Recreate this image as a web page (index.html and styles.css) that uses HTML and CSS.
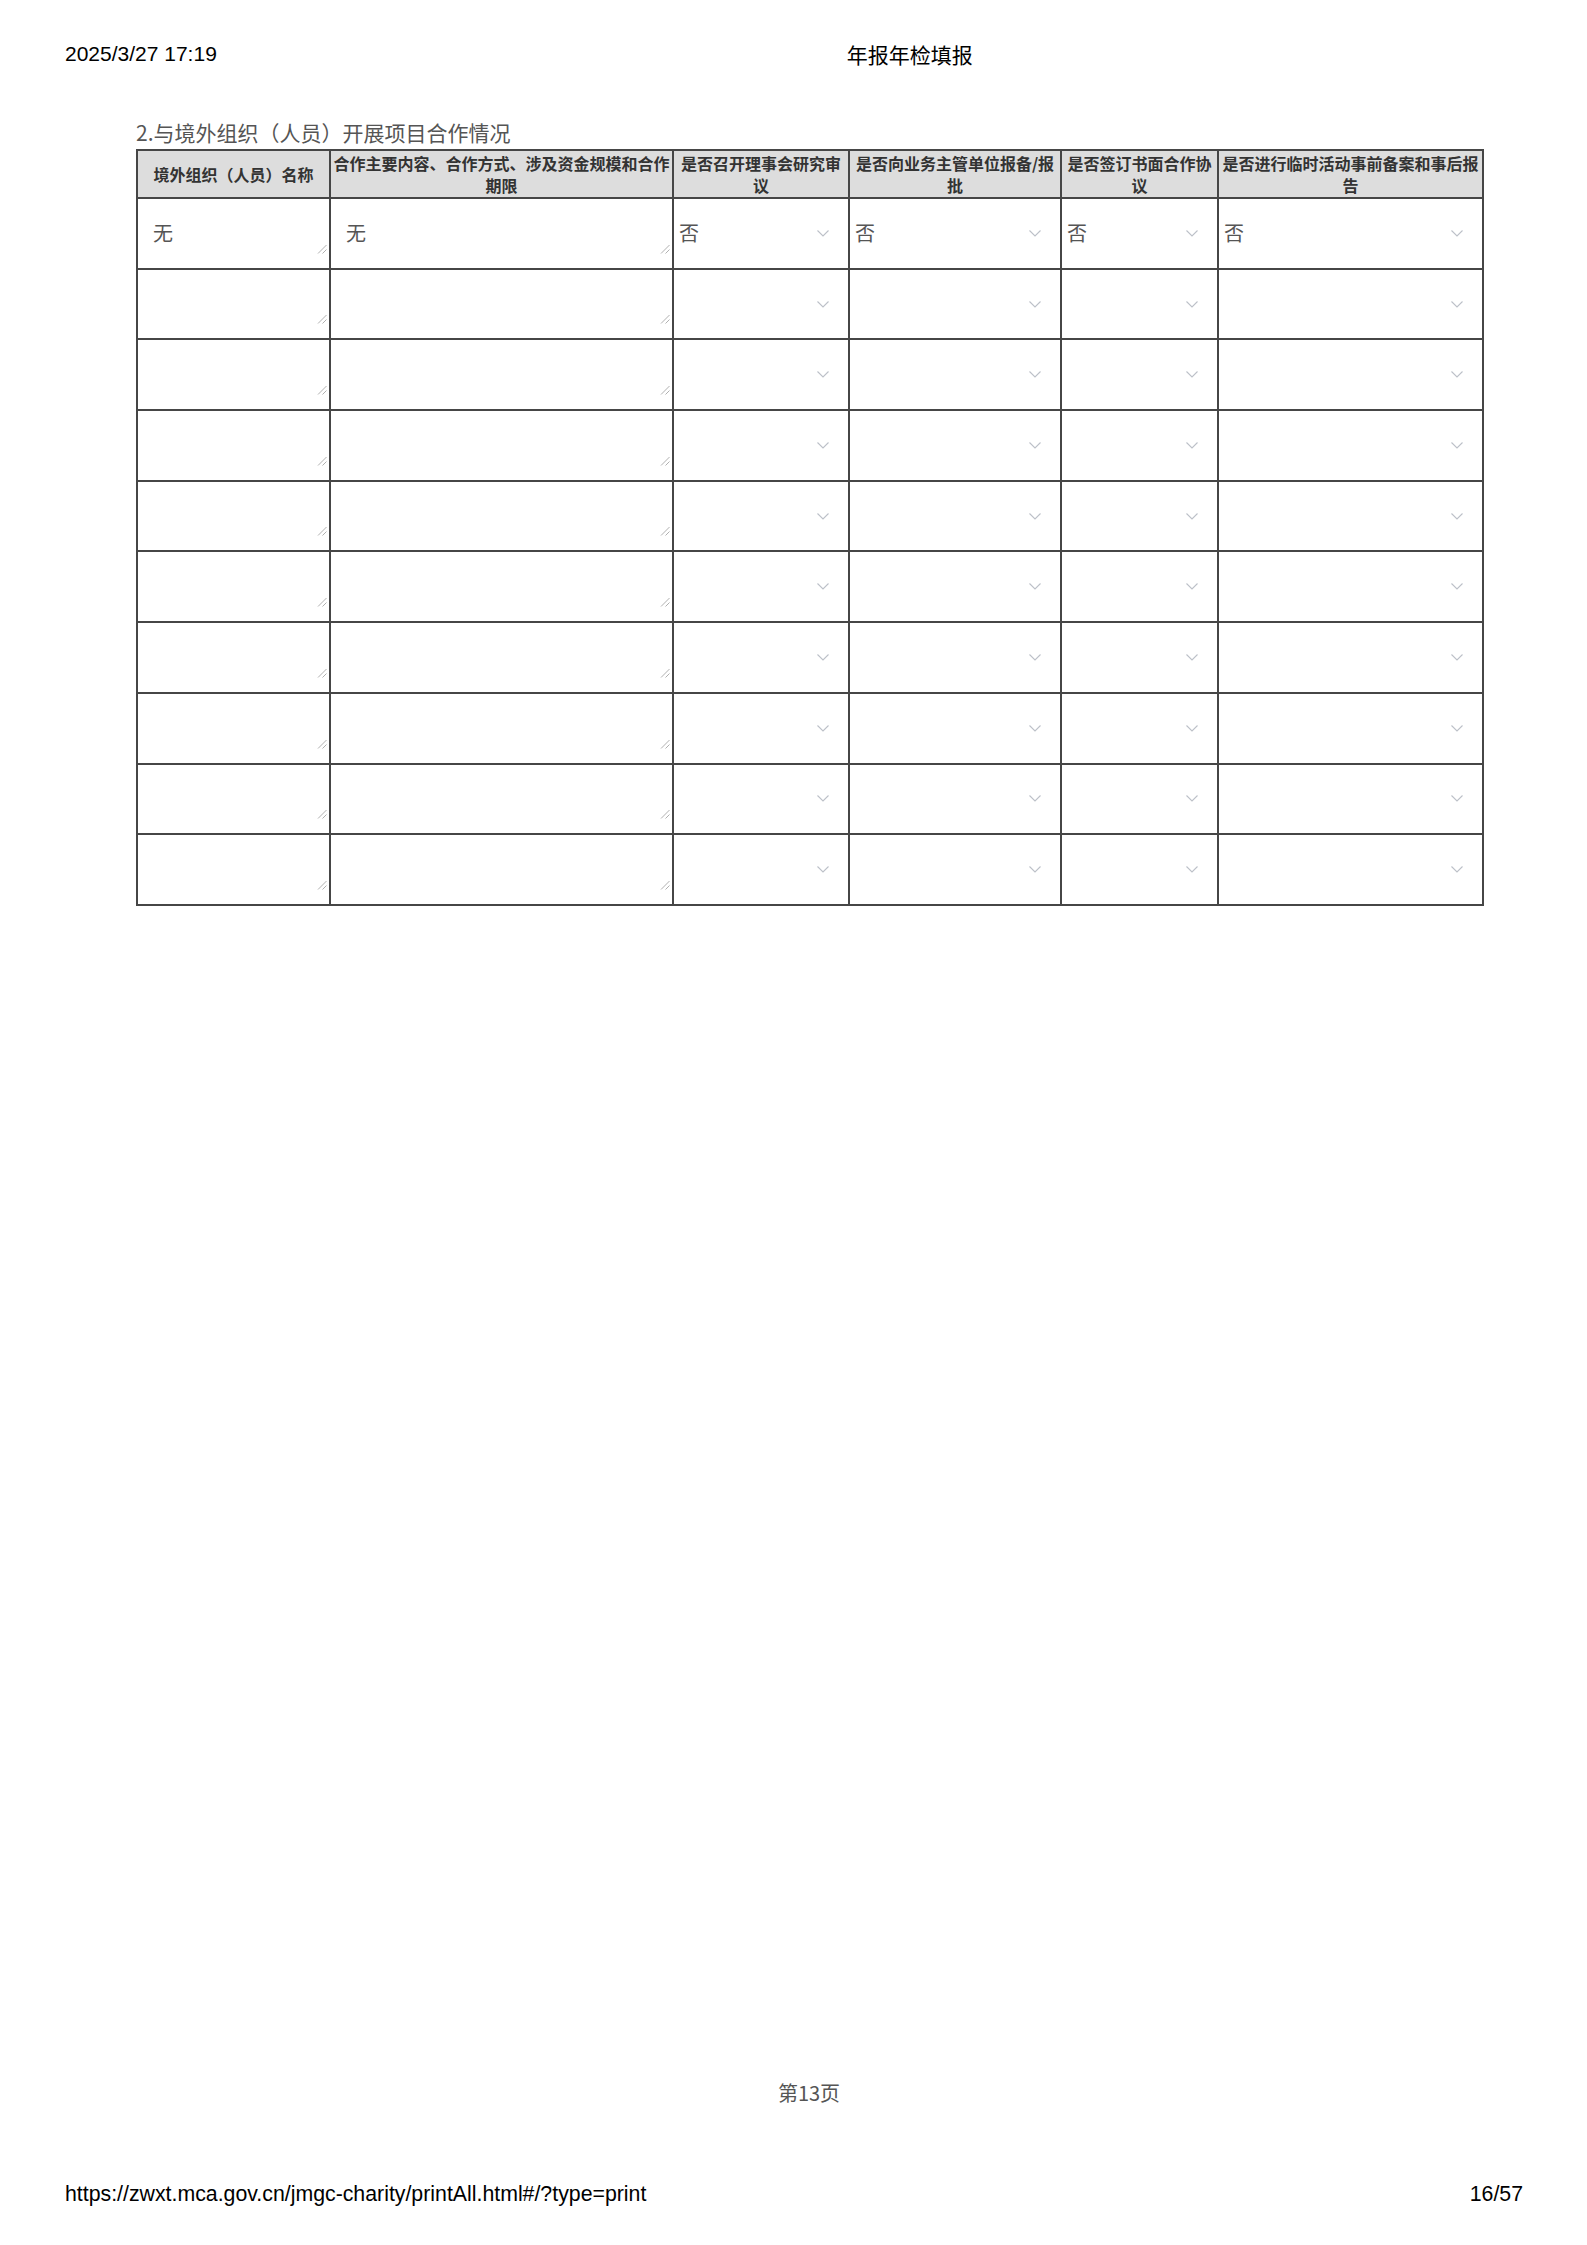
FILE: index.html
```html
<!DOCTYPE html>
<html lang="zh-CN">
<head>
<meta charset="utf-8">
<title>年报年检填报</title>
<link rel="stylesheet" href="styles.css">
</head>
<body>
<div class="page">
  <header class="print-head">
    <span class="date">2025/3/27 17:19</span>
    <span class="doc-title">年报年检填报</span>
  </header>

  <main class="content">
    <h2 class="section-title">2.与境外组织（人员）开展项目合作情况</h2>
    <table class="grid">
      <colgroup>
        <col class="w1"><col class="w2"><col class="w3"><col class="w4"><col class="w5"><col class="w6">
      </colgroup>
      <thead>
        <tr>
          <th>境外组织（人员）名称</th>
          <th>合作主要内容、合作方式、涉及资金规模和合作期限</th>
          <th>是否召开理事会研究审议</th>
          <th>是否向业务主管单位报备/报批</th>
          <th>是否签订书面合作协议</th>
          <th>是否进行临时活动事前备案和事后报告</th>
        </tr>
      </thead>
      <tbody>
        <tr>
          <td class="ta"><span class="val">无</span><svg class="grip" width="10" height="10" viewBox="0 0 10 10"><path d="M1 9.5 9.5 1M5.5 9.5 9.5 5.5"/></svg></td>
          <td class="ta"><span class="val">无</span><svg class="grip" width="10" height="10" viewBox="0 0 10 10"><path d="M1 9.5 9.5 1M5.5 9.5 9.5 5.5"/></svg></td>
          <td class="sel"><div class="sel-box"><span class="val">否</span><svg class="chev" width="12" height="7" viewBox="0 0 12 7"><path d="M0.5 0.5 6 6 11.5 0.5"/></svg></div></td>
          <td class="sel"><div class="sel-box"><span class="val">否</span><svg class="chev" width="12" height="7" viewBox="0 0 12 7"><path d="M0.5 0.5 6 6 11.5 0.5"/></svg></div></td>
          <td class="sel"><div class="sel-box"><span class="val">否</span><svg class="chev" width="12" height="7" viewBox="0 0 12 7"><path d="M0.5 0.5 6 6 11.5 0.5"/></svg></div></td>
          <td class="sel"><div class="sel-box"><span class="val">否</span><svg class="chev" width="12" height="7" viewBox="0 0 12 7"><path d="M0.5 0.5 6 6 11.5 0.5"/></svg></div></td>
        </tr>
        <tr>
          <td class="ta"><span class="val"></span><svg class="grip" width="10" height="10" viewBox="0 0 10 10"><path d="M1 9.5 9.5 1M5.5 9.5 9.5 5.5"/></svg></td>
          <td class="ta"><span class="val"></span><svg class="grip" width="10" height="10" viewBox="0 0 10 10"><path d="M1 9.5 9.5 1M5.5 9.5 9.5 5.5"/></svg></td>
          <td class="sel"><div class="sel-box"><span class="val"></span><svg class="chev" width="12" height="7" viewBox="0 0 12 7"><path d="M0.5 0.5 6 6 11.5 0.5"/></svg></div></td>
          <td class="sel"><div class="sel-box"><span class="val"></span><svg class="chev" width="12" height="7" viewBox="0 0 12 7"><path d="M0.5 0.5 6 6 11.5 0.5"/></svg></div></td>
          <td class="sel"><div class="sel-box"><span class="val"></span><svg class="chev" width="12" height="7" viewBox="0 0 12 7"><path d="M0.5 0.5 6 6 11.5 0.5"/></svg></div></td>
          <td class="sel"><div class="sel-box"><span class="val"></span><svg class="chev" width="12" height="7" viewBox="0 0 12 7"><path d="M0.5 0.5 6 6 11.5 0.5"/></svg></div></td>
        </tr>
        <tr>
          <td class="ta"><span class="val"></span><svg class="grip" width="10" height="10" viewBox="0 0 10 10"><path d="M1 9.5 9.5 1M5.5 9.5 9.5 5.5"/></svg></td>
          <td class="ta"><span class="val"></span><svg class="grip" width="10" height="10" viewBox="0 0 10 10"><path d="M1 9.5 9.5 1M5.5 9.5 9.5 5.5"/></svg></td>
          <td class="sel"><div class="sel-box"><span class="val"></span><svg class="chev" width="12" height="7" viewBox="0 0 12 7"><path d="M0.5 0.5 6 6 11.5 0.5"/></svg></div></td>
          <td class="sel"><div class="sel-box"><span class="val"></span><svg class="chev" width="12" height="7" viewBox="0 0 12 7"><path d="M0.5 0.5 6 6 11.5 0.5"/></svg></div></td>
          <td class="sel"><div class="sel-box"><span class="val"></span><svg class="chev" width="12" height="7" viewBox="0 0 12 7"><path d="M0.5 0.5 6 6 11.5 0.5"/></svg></div></td>
          <td class="sel"><div class="sel-box"><span class="val"></span><svg class="chev" width="12" height="7" viewBox="0 0 12 7"><path d="M0.5 0.5 6 6 11.5 0.5"/></svg></div></td>
        </tr>
        <tr>
          <td class="ta"><span class="val"></span><svg class="grip" width="10" height="10" viewBox="0 0 10 10"><path d="M1 9.5 9.5 1M5.5 9.5 9.5 5.5"/></svg></td>
          <td class="ta"><span class="val"></span><svg class="grip" width="10" height="10" viewBox="0 0 10 10"><path d="M1 9.5 9.5 1M5.5 9.5 9.5 5.5"/></svg></td>
          <td class="sel"><div class="sel-box"><span class="val"></span><svg class="chev" width="12" height="7" viewBox="0 0 12 7"><path d="M0.5 0.5 6 6 11.5 0.5"/></svg></div></td>
          <td class="sel"><div class="sel-box"><span class="val"></span><svg class="chev" width="12" height="7" viewBox="0 0 12 7"><path d="M0.5 0.5 6 6 11.5 0.5"/></svg></div></td>
          <td class="sel"><div class="sel-box"><span class="val"></span><svg class="chev" width="12" height="7" viewBox="0 0 12 7"><path d="M0.5 0.5 6 6 11.5 0.5"/></svg></div></td>
          <td class="sel"><div class="sel-box"><span class="val"></span><svg class="chev" width="12" height="7" viewBox="0 0 12 7"><path d="M0.5 0.5 6 6 11.5 0.5"/></svg></div></td>
        </tr>
        <tr>
          <td class="ta"><span class="val"></span><svg class="grip" width="10" height="10" viewBox="0 0 10 10"><path d="M1 9.5 9.5 1M5.5 9.5 9.5 5.5"/></svg></td>
          <td class="ta"><span class="val"></span><svg class="grip" width="10" height="10" viewBox="0 0 10 10"><path d="M1 9.5 9.5 1M5.5 9.5 9.5 5.5"/></svg></td>
          <td class="sel"><div class="sel-box"><span class="val"></span><svg class="chev" width="12" height="7" viewBox="0 0 12 7"><path d="M0.5 0.5 6 6 11.5 0.5"/></svg></div></td>
          <td class="sel"><div class="sel-box"><span class="val"></span><svg class="chev" width="12" height="7" viewBox="0 0 12 7"><path d="M0.5 0.5 6 6 11.5 0.5"/></svg></div></td>
          <td class="sel"><div class="sel-box"><span class="val"></span><svg class="chev" width="12" height="7" viewBox="0 0 12 7"><path d="M0.5 0.5 6 6 11.5 0.5"/></svg></div></td>
          <td class="sel"><div class="sel-box"><span class="val"></span><svg class="chev" width="12" height="7" viewBox="0 0 12 7"><path d="M0.5 0.5 6 6 11.5 0.5"/></svg></div></td>
        </tr>
        <tr>
          <td class="ta"><span class="val"></span><svg class="grip" width="10" height="10" viewBox="0 0 10 10"><path d="M1 9.5 9.5 1M5.5 9.5 9.5 5.5"/></svg></td>
          <td class="ta"><span class="val"></span><svg class="grip" width="10" height="10" viewBox="0 0 10 10"><path d="M1 9.5 9.5 1M5.5 9.5 9.5 5.5"/></svg></td>
          <td class="sel"><div class="sel-box"><span class="val"></span><svg class="chev" width="12" height="7" viewBox="0 0 12 7"><path d="M0.5 0.5 6 6 11.5 0.5"/></svg></div></td>
          <td class="sel"><div class="sel-box"><span class="val"></span><svg class="chev" width="12" height="7" viewBox="0 0 12 7"><path d="M0.5 0.5 6 6 11.5 0.5"/></svg></div></td>
          <td class="sel"><div class="sel-box"><span class="val"></span><svg class="chev" width="12" height="7" viewBox="0 0 12 7"><path d="M0.5 0.5 6 6 11.5 0.5"/></svg></div></td>
          <td class="sel"><div class="sel-box"><span class="val"></span><svg class="chev" width="12" height="7" viewBox="0 0 12 7"><path d="M0.5 0.5 6 6 11.5 0.5"/></svg></div></td>
        </tr>
        <tr>
          <td class="ta"><span class="val"></span><svg class="grip" width="10" height="10" viewBox="0 0 10 10"><path d="M1 9.5 9.5 1M5.5 9.5 9.5 5.5"/></svg></td>
          <td class="ta"><span class="val"></span><svg class="grip" width="10" height="10" viewBox="0 0 10 10"><path d="M1 9.5 9.5 1M5.5 9.5 9.5 5.5"/></svg></td>
          <td class="sel"><div class="sel-box"><span class="val"></span><svg class="chev" width="12" height="7" viewBox="0 0 12 7"><path d="M0.5 0.5 6 6 11.5 0.5"/></svg></div></td>
          <td class="sel"><div class="sel-box"><span class="val"></span><svg class="chev" width="12" height="7" viewBox="0 0 12 7"><path d="M0.5 0.5 6 6 11.5 0.5"/></svg></div></td>
          <td class="sel"><div class="sel-box"><span class="val"></span><svg class="chev" width="12" height="7" viewBox="0 0 12 7"><path d="M0.5 0.5 6 6 11.5 0.5"/></svg></div></td>
          <td class="sel"><div class="sel-box"><span class="val"></span><svg class="chev" width="12" height="7" viewBox="0 0 12 7"><path d="M0.5 0.5 6 6 11.5 0.5"/></svg></div></td>
        </tr>
        <tr>
          <td class="ta"><span class="val"></span><svg class="grip" width="10" height="10" viewBox="0 0 10 10"><path d="M1 9.5 9.5 1M5.5 9.5 9.5 5.5"/></svg></td>
          <td class="ta"><span class="val"></span><svg class="grip" width="10" height="10" viewBox="0 0 10 10"><path d="M1 9.5 9.5 1M5.5 9.5 9.5 5.5"/></svg></td>
          <td class="sel"><div class="sel-box"><span class="val"></span><svg class="chev" width="12" height="7" viewBox="0 0 12 7"><path d="M0.5 0.5 6 6 11.5 0.5"/></svg></div></td>
          <td class="sel"><div class="sel-box"><span class="val"></span><svg class="chev" width="12" height="7" viewBox="0 0 12 7"><path d="M0.5 0.5 6 6 11.5 0.5"/></svg></div></td>
          <td class="sel"><div class="sel-box"><span class="val"></span><svg class="chev" width="12" height="7" viewBox="0 0 12 7"><path d="M0.5 0.5 6 6 11.5 0.5"/></svg></div></td>
          <td class="sel"><div class="sel-box"><span class="val"></span><svg class="chev" width="12" height="7" viewBox="0 0 12 7"><path d="M0.5 0.5 6 6 11.5 0.5"/></svg></div></td>
        </tr>
        <tr>
          <td class="ta"><span class="val"></span><svg class="grip" width="10" height="10" viewBox="0 0 10 10"><path d="M1 9.5 9.5 1M5.5 9.5 9.5 5.5"/></svg></td>
          <td class="ta"><span class="val"></span><svg class="grip" width="10" height="10" viewBox="0 0 10 10"><path d="M1 9.5 9.5 1M5.5 9.5 9.5 5.5"/></svg></td>
          <td class="sel"><div class="sel-box"><span class="val"></span><svg class="chev" width="12" height="7" viewBox="0 0 12 7"><path d="M0.5 0.5 6 6 11.5 0.5"/></svg></div></td>
          <td class="sel"><div class="sel-box"><span class="val"></span><svg class="chev" width="12" height="7" viewBox="0 0 12 7"><path d="M0.5 0.5 6 6 11.5 0.5"/></svg></div></td>
          <td class="sel"><div class="sel-box"><span class="val"></span><svg class="chev" width="12" height="7" viewBox="0 0 12 7"><path d="M0.5 0.5 6 6 11.5 0.5"/></svg></div></td>
          <td class="sel"><div class="sel-box"><span class="val"></span><svg class="chev" width="12" height="7" viewBox="0 0 12 7"><path d="M0.5 0.5 6 6 11.5 0.5"/></svg></div></td>
        </tr>
        <tr>
          <td class="ta"><span class="val"></span><svg class="grip" width="10" height="10" viewBox="0 0 10 10"><path d="M1 9.5 9.5 1M5.5 9.5 9.5 5.5"/></svg></td>
          <td class="ta"><span class="val"></span><svg class="grip" width="10" height="10" viewBox="0 0 10 10"><path d="M1 9.5 9.5 1M5.5 9.5 9.5 5.5"/></svg></td>
          <td class="sel"><div class="sel-box"><span class="val"></span><svg class="chev" width="12" height="7" viewBox="0 0 12 7"><path d="M0.5 0.5 6 6 11.5 0.5"/></svg></div></td>
          <td class="sel"><div class="sel-box"><span class="val"></span><svg class="chev" width="12" height="7" viewBox="0 0 12 7"><path d="M0.5 0.5 6 6 11.5 0.5"/></svg></div></td>
          <td class="sel"><div class="sel-box"><span class="val"></span><svg class="chev" width="12" height="7" viewBox="0 0 12 7"><path d="M0.5 0.5 6 6 11.5 0.5"/></svg></div></td>
          <td class="sel"><div class="sel-box"><span class="val"></span><svg class="chev" width="12" height="7" viewBox="0 0 12 7"><path d="M0.5 0.5 6 6 11.5 0.5"/></svg></div></td>
        </tr>
      </tbody>
    </table>
  </main>

  <div class="page-no">第13页</div>

  <footer class="print-foot">
    <span class="url">https://zwxt.mca.gov.cn/jmgc-charity/printAll.html#/?type=print</span>
    <span class="count">16/57</span>
  </footer>
</div>
</body>
</html>
```

FILE: styles.css
```css
* { box-sizing: border-box; }

html, body {
  margin: 0;
  padding: 0;
  background: #fff;
}

body {
  font-family: "Liberation Sans", Arial, sans-serif;
  color: #000;
}

.page {
  width: 1587px;
  height: 2245px;
  display: flex;
  flex-direction: column;
}

/* browser print header */
.print-head {
  display: flex;
  align-items: center;
  margin-top: 42px;
  padding-left: 65px;
  height: 24px;
  font-size: 21px;
  line-height: 24px;
}

.doc-title {
  margin-left: 630px;
  margin-top: 4px;
  font-family: "Liberation Sans", "Noto Sans CJK SC", sans-serif;
  font-size: 21px;
}

/* content */
.content {
  margin-left: 136px;
  width: 1346px;
  font-family: "Noto Sans CJK SC", "Noto Sans", sans-serif;
}

.section-title {
  margin: 52px 0 3px 0;
  font-size: 21px;
  line-height: 28px;
  font-weight: 400;
  color: #555;
}

.grid {
  width: 1346px;
  border-collapse: collapse;
  table-layout: fixed;
  border: 2px solid #464646;
}

.w1 { width: 193px; }
.w2 { width: 343px; }
.w3 { width: 176px; }
.w4 { width: 212px; }
.w5 { width: 157px; }
.w6 { width: 265px; }

.grid th,
.grid td {
  border: 2px solid #464646;
}

.grid th {
  height: 48px;
  padding: 0 1px;
  background: #dddddd;
  color: #333;
  font-size: 16px;
  line-height: 22px;
  font-weight: 700;
  text-align: center;
  vertical-align: middle;
}

.grid td {
  height: 70.7px;
  padding: 0;
  vertical-align: middle;
  color: #555;
  font-size: 20px;
  line-height: 26px;
}

/* textarea-like cells */
.grid td.ta {
  position: relative;
  padding-left: 15px;
}

.grip {
  position: absolute;
  right: 2px;
  bottom: 14px;
  fill: none;
  stroke: #b0b0b0;
  stroke-width: 1;
}

/* select-like cells */
.sel-box {
  display: flex;
  align-items: center;
  justify-content: space-between;
  padding: 0 19px 0 5px;
  height: 26px;
}

.chev {
  fill: none;
  stroke: #bcc0c8;
  stroke-width: 1.1;
}

.val {
  display: inline-block;
  min-height: 26px;
}

/* page number */
.page-no {
  margin-top: auto;
  margin-left: 136px;
  width: 1346px;
  text-align: center;
  font-family: "Noto Sans CJK SC", sans-serif;
  font-size: 20px;
  line-height: 26px;
  color: #555;
}

/* browser print footer */
.print-foot {
  display: flex;
  justify-content: space-between;
  align-items: center;
  margin-top: 76px;
  margin-bottom: 39px;
  padding: 0 64px 0 65px;
  font-size: 21.3px;
  line-height: 24px;
}
```
